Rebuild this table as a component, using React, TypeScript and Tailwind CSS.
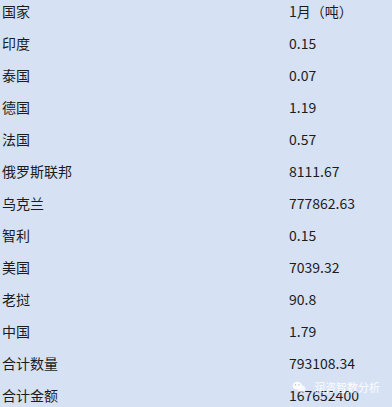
const rows: [string, string][] = [
  ["国家", "1月（吨）"],
  ["印度", "0.15"],
  ["泰国", "0.07"],
  ["德国", "1.19"],
  ["法国", "0.57"],
  ["俄罗斯联邦", "8111.67"],
  ["乌克兰", "777862.63"],
  ["智利", "0.15"],
  ["美国", "7039.32"],
  ["老挝", "90.8"],
  ["中国", "1.79"],
  ["合计数量", "793108.34"],
  ["合计金额", "167652400"],
];

export default function App() {
  return (
    <div className="relative w-[392px] h-[407px] overflow-hidden bg-[#d6e2f4] text-[14px] text-[#1c1c1c] font-['Noto_Sans_CJK_SC','Noto_Sans',sans-serif]">
      <div className="flex flex-col -mt-[5px]">
        {rows.map(([country, value]) => (
          <div key={country} className="flex h-[32px] items-center">
            <div className="w-[289px] pl-[2px]">{country}</div>
            <div className="flex-1">{value}</div>
          </div>
        ))}
      </div>

      {/* watermark */}
      <div className="absolute left-[292px] top-[381px] flex items-center gap-[8px] text-white/90 text-[11px] leading-none">
        <svg width="14" height="12" viewBox="0 0 16 14">
          <ellipse cx="6" cy="5.5" rx="5.5" ry="4.5" fill="white" opacity="0.9" />
          <ellipse cx="11" cy="9" rx="4.5" ry="3.8" fill="white" opacity="0.75" />
          <circle cx="4" cy="4.5" r="0.8" fill="#9fb0c8" />
          <circle cx="8" cy="4.5" r="0.8" fill="#9fb0c8" />
        </svg>
        <span>润咨智数分析</span>
      </div>
    </div>
  );
}
